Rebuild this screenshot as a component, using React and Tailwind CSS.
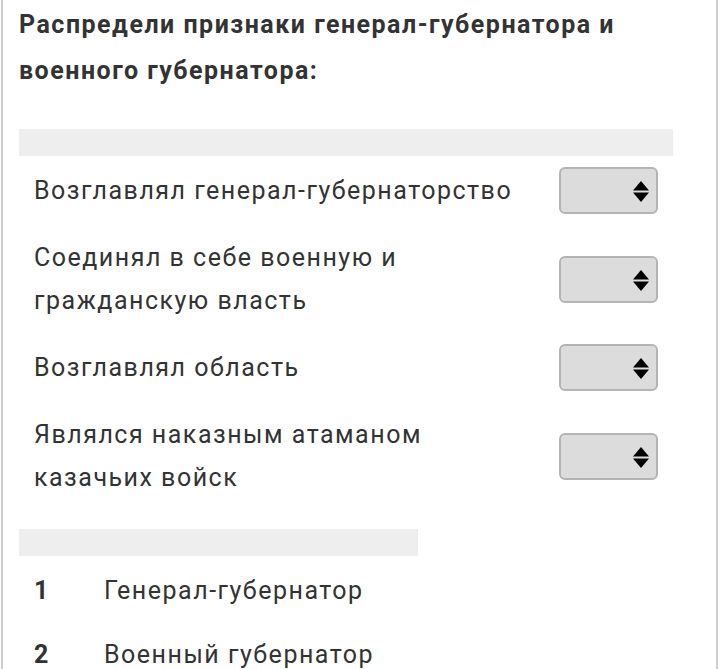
import React from 'react';

const rows = [
    ['Возглавлял генерал-губернаторство'],
    ['Соединял в себе военную и', 'гражданскую власть'],
    ['Возглавлял область'],
    ['Являлся наказным атаманом', 'казачьих войск'],
];

const answers = ['Генерал-губернатор', 'Военный губернатор'];

function SelectBox() {
    return (
        <div className="relative w-[99px] h-[47px] shrink-0 rounded-[6px] border-2 border-[#b4b4b4] bg-[#dcdcdc]">
            <svg className="absolute right-[7px] top-[12px]" width="16" height="22" viewBox="0 0 16 22">
                <polygon points="8,0 16,9.5 0,9.5" fill="#000" />
                <polygon points="0,11.5 16,11.5 8,21" fill="#000" />
            </svg>
        </div>
    );
}

export default function App() {
    return (
        <div className="w-[720px] h-[669px] overflow-hidden bg-white tracking-[1.5px]" style={{ fontFamily: 'Roboto, "Noto Sans", sans-serif' }}>
            <div className="h-full mx-[1px] w-[717px] border-l-2 border-r-2 border-[#cdcdcd] pl-[16px] pt-[2px]">
                <h1 className="text-[25px] leading-[46px] font-bold text-[#333] w-[660px]">
                    Распредели признаки генерал-губернатора и военного губернатора:
                </h1>

                <div className="mt-[35px] w-[654px] h-[27px] bg-[#eeeeee]" />
                <div className="w-[654px]">
                    {rows.map((lines, i) => (
                        <div key={i} className="flex items-center justify-between pl-[15px] pr-[15px] py-[11px] min-h-[69px]">
                            <div className="text-[25px] leading-[43px] text-[#333]">
                                {lines.map((l, j) => (
                                    <div key={j}>{l}</div>
                                ))}
                            </div>
                            <SelectBox />
                        </div>
                    ))}
                </div>

                <div className="mt-[19px] w-[399px] h-[27px] bg-[#eeeeee]" />
                <div className="pt-[3px]">
                    {answers.map((a, i) => (
                        <div key={i} className="flex items-center h-[64px] text-[25px] text-[#333]">
                            <span className="w-[85px] pl-[15px] font-bold">{i + 1}</span>
                            <span>{a}</span>
                        </div>
                    ))}
                </div>
            </div>
        </div>
    );
}
